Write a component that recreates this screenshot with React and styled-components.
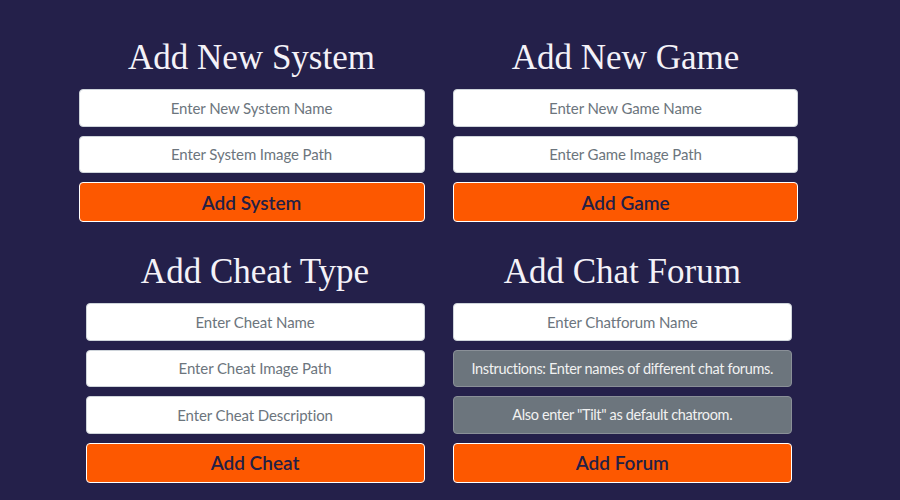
import styled, { createGlobalStyle } from "styled-components";

const GlobalStyle = createGlobalStyle`
  html, body {
    margin: 0;
    padding: 0;
    background: #24204a;
  }
  * {
    box-sizing: border-box;
  }
`;

const Page = styled.main`
  width: 900px;
  height: 500px;
  padding-top: 35px;
  display: grid;
  grid-template-columns: 424.5px 1fr;
  column-gap: 28.5px;
  row-gap: 27px;
  align-content: start;
  overflow: hidden;
`;

const Section = styled.form`
  width: ${(props) => props.width}px;
  justify-self: ${(props) => (props.side === "left" ? "end" : "start")};
  display: flex;
  flex-direction: column;
  gap: 9px;
`;

const Heading = styled.h1`
  margin: 0;
  height: 45px;
  line-height: 45px;
  text-align: center;
  font-family: "Liberation Serif", "Times New Roman", serif;
  font-weight: 400;
  font-size: 35px;
  color: #f4f2f8;
`;

const Input = styled.input`
  height: 37.5px;
  width: 100%;
  padding: 0 12px;
  border: 1px solid #ced4da;
  border-radius: 4px;
  background: #ffffff;
  text-align: center;
  font-family: Lato, "Liberation Sans", sans-serif;
  font-size: 15px;
  letter-spacing: -0.1px;
  color: #495057;
  &::placeholder {
    color: #6c757d;
  }
`;

const Note = styled.div`
  height: 37.5px;
  display: flex;
  align-items: center;
  justify-content: center;
  white-space: nowrap;
  border: 1px solid #8a9098;
  border-radius: 4px;
  background: #6c757d;
  font-family: Lato, "Liberation Sans", sans-serif;
  font-size: 14.5px;
  letter-spacing: -0.35px;
  color: #f1f1f1;
`;

const SubmitButton = styled.button`
  height: 40px;
  width: 100%;
  border: 1.5px solid #ffffff;
  border-radius: 4px;
  background: #fd5800;
  color: #231f46;
  font-family: Lato, "Liberation Sans", sans-serif;
  font-size: 19px;
  font-weight: 600;
  cursor: pointer;
`;

const App = () => {
  return (
    <>
      <GlobalStyle />
      <Page>
        <Section side="left" width={346}>
          <Heading>Add New System</Heading>
          <Input placeholder="Enter New System Name" />
          <Input placeholder="Enter System Image Path" />
          <SubmitButton type="button">Add System</SubmitButton>
        </Section>

        <Section side="right" width={345}>
          <Heading>Add New Game</Heading>
          <Input placeholder="Enter New Game Name" />
          <Input placeholder="Enter Game Image Path" />
          <SubmitButton type="button">Add Game</SubmitButton>
        </Section>

        <Section side="left" width={339}>
          <Heading>Add Cheat Type</Heading>
          <Input placeholder="Enter Cheat Name" />
          <Input placeholder="Enter Cheat Image Path" />
          <Input placeholder="Enter Cheat Description" />
          <SubmitButton type="button">Add Cheat</SubmitButton>
        </Section>

        <Section side="right" width={338.5}>
          <Heading>Add Chat Forum</Heading>
          <Input placeholder="Enter Chatforum Name" />
          <Note>Instructions: Enter names of different chat forums.</Note>
          <Note>Also enter "Tilt" as default chatroom.</Note>
          <SubmitButton type="button">Add Forum</SubmitButton>
        </Section>
      </Page>
    </>
  );
};

export default App;
